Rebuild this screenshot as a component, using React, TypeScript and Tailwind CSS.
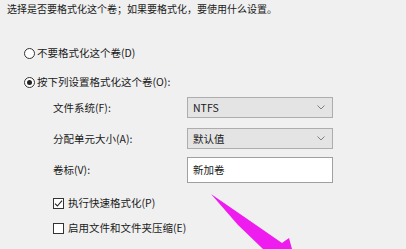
const font = { fontFamily: '"Noto Sans CJK SC", "Noto Sans", sans-serif' };

function Radio({ checked, label }: { checked?: boolean; label: string }) {
  return (
    <div className="flex h-[14px] items-center pl-[24px]">
      <span className="flex h-[11px] w-[11px] items-center justify-center rounded-full border border-[#333] bg-white">
        {checked && <span className="h-[5px] w-[5px] rounded-full bg-[#222]" />}
      </span>
      <span className="ml-[2px] leading-[14px]">{label}</span>
    </div>
  );
}

function Check({ checked, label }: { checked?: boolean; label: string }) {
  return (
    <div className="flex h-[14px] items-center pl-[53px]">
      <span className="flex h-[11px] w-[11px] items-center justify-center border border-[#333] bg-white">
        {checked && (
          <svg width="9" height="9" viewBox="0 0 9 9">
            <path d="M1 4.6 L3.4 7 L8 1.6" fill="none" stroke="#222" strokeWidth="1.1" />
          </svg>
        )}
      </span>
      <span className="ml-[4px] leading-[14px]">{label}</span>
    </div>
  );
}

function Select({ value }: { value: string }) {
  return (
    <div className="flex h-[21px] w-[146px] items-center justify-between border border-[#adadad] bg-[#e4e4e4] pl-[5px] pr-[7px]">
      <span className="leading-[14px]">{value}</span>
      <svg width="8" height="5" viewBox="0 0 8 5">
        <path d="M0.5 0.5 L4 4 L7.5 0.5" fill="none" stroke="#808080" strokeWidth="1" />
      </svg>
    </div>
  );
}

export default function App() {
  return (
    <div
      className="relative h-[249px] w-[406px] overflow-hidden bg-[#f0f0f0] text-[10.5px] text-[#1a1a1a]"
      style={font}
    >
      <div className="pl-[7px] pt-[3px] text-[10px] leading-[12px]">
        选择是否要格式化这个卷；如果要格式化，要使用什么设置。
      </div>

      <div className="mt-[31px]">
        <Radio label="不要格式化这个卷(D)" />
      </div>
      <div className="mt-[15px]">
        <Radio checked label="按下列设置格式化这个卷(O):" />
      </div>

      <div className="mt-[8px] grid grid-cols-[134px_146px] items-center gap-y-[8px] pl-[53px]">
        <span>文件系统(F):</span>
        <Select value="NTFS" />
        <span className="mt-[2px]">分配单元大小(A):</span>
        <div className="mt-[2px]">
          <Select value="默认值" />
        </div>
        <span>卷标(V):</span>
        <div className="flex h-[26px] w-[146px] items-center border border-[#a0a0a0] bg-white pl-[5px]">
          新加卷
        </div>
      </div>

      <div className="mt-[13px]">
        <Check checked label="执行快速格式化(P)" />
      </div>
      <div className="mt-[11px]">
        <Check label="启用文件和文件夹压缩(E)" />
      </div>

      <svg
        className="pointer-events-none absolute left-0 top-0"
        width="406"
        height="249"
        viewBox="0 0 406 249"
      >
        <path d="M211 194 L256 225 L282 243 L289 238 L292 249 L263 249 L238 225 Z" fill="#ee1cee" />
      </svg>
    </div>
  );
}
